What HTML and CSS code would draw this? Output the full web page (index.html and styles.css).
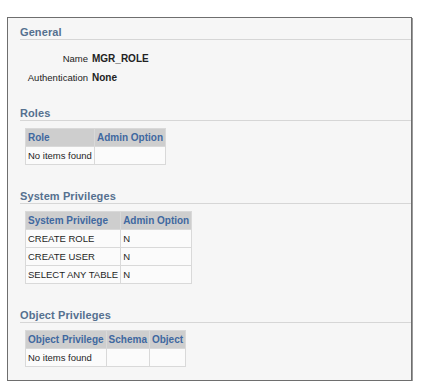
FILE: index.html
```html
<!DOCTYPE html>
<html>
<head>
<meta charset="utf-8">
<link rel="stylesheet" href="styles.css">
</head>
<body>
<div class="frame">
  <section class="sec sec-general">
    <h2 class="head">General</h2>
    <div class="props">
      <div class="lbl">Name</div><div class="val">MGR_ROLE</div>
      <div class="lbl">Authentication</div><div class="val">None</div>
    </div>
  </section>
  <section class="sec">
    <h2 class="head">Roles</h2>
    <table class="grid">
      <tr><th>Role</th><th>Admin Option</th></tr>
      <tr><td>No items found</td><td></td></tr>
    </table>
  </section>
  <section class="sec">
    <h2 class="head">System Privileges</h2>
    <table class="grid">
      <tr><th>System Privilege</th><th>Admin Option</th></tr>
      <tr><td>CREATE ROLE</td><td>N</td></tr>
      <tr><td>CREATE USER</td><td>N</td></tr>
      <tr><td>SELECT ANY TABLE</td><td>N</td></tr>
    </table>
  </section>
  <section class="sec">
    <h2 class="head">Object Privileges</h2>
    <table class="grid">
      <tr><th>Object Privilege</th><th>Schema</th><th>Object</th></tr>
      <tr><td>No items found</td><td></td><td></td></tr>
    </table>
  </section>
</div>
</body>
</html>
```

FILE: styles.css
```css
html, body {
  margin: 0;
  padding: 0;
  background: #ffffff;
}
body {
  font-family: "Liberation Sans", Arial, sans-serif;
  color: #222;
  padding: 17px 0 0 7px;
}
.frame {
  width: 405px;
  height: 364px;
  box-sizing: border-box;
  background: #f6f6f6;
  border: 1px solid #6e6e6e;
  box-shadow: 1px 1px 0 #9a9a9a;
  padding: 8px 0 0 12px;
}
.sec {
  margin-bottom: 25px;
}
.sec-general {
  margin-bottom: 20px;
}
.head {
  margin: 0;
  font-size: 11px;
  line-height: 13px;
  font-weight: bold;
  color: #55708f;
  border-bottom: 1px solid #d6d6d6;
  letter-spacing: 0.1px;
}
.props {
  display: grid;
  grid-template-columns: 68px auto;
  column-gap: 4px;
  margin-top: 9px;
  font-size: 9.5px;
  line-height: 19px;
}
.lbl {
  text-align: right;
}
.val {
  font-weight: bold;
  font-size: 10px;
}
.grid {
  margin: 7px 0 0 5px;
  border-collapse: separate;
  border-spacing: 1px;
  background: #d9d9d9;
  font-size: 9.5px;
}
.grid th, .grid td {
  height: 17px;
  padding: 0 2px;
  text-align: left;
  white-space: nowrap;
}
.grid th {
  background: #cecece;
  color: #3f68a0;
  font-weight: bold;
  font-size: 10px;
}
.grid td {
  background: #fbfbfb;
  color: #1e1e1e;
}
```
